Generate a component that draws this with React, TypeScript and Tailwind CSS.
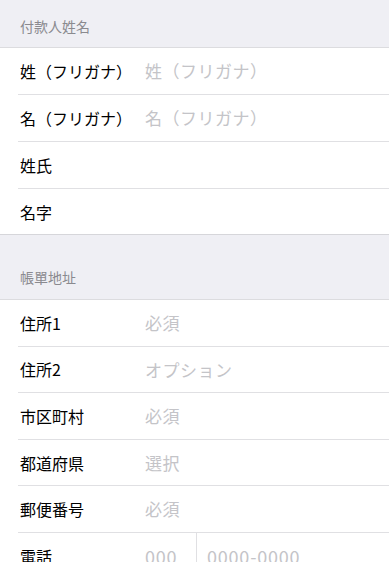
const font = { fontFamily: '"Noto Sans CJK JP", "Noto Sans", sans-serif' };

function SectionHeader({ title, tall }: { title: string; tall?: boolean }) {
  return (
    <div
      className={`flex items-end bg-[#efeff4] px-5 ${tall ? "h-[65px] border-t border-[#d6d6da] pb-[12px]" : "h-[47px] pb-[11px]"}`}
    >
      <span className="text-[14px] leading-5 text-[#8a8a8f]">{title}</span>
    </div>
  );
}

function Row({
  label,
  placeholder,
  last,
  h = "h-[47px]",
  children,
}: {
  label: string;
  placeholder?: string;
  last?: boolean;
  h?: string;
  children?: React.ReactNode;
}) {
  return (
    <div className="bg-white pl-[18px]">
      <div className={`flex ${h} items-center pl-[2px] ${last ? "" : "border-b border-[#e0e0e3]"}`}>
        <span className="w-[125px] shrink-0 text-[16px] text-black">{label}</span>
        {children ?? <span className="text-[17px] tracking-[0.5px] text-[#c4c4c8]">{placeholder}</span>}
      </div>
    </div>
  );
}

export default function App() {
  return (
    <div className="h-[562px] w-[389px] overflow-hidden bg-white" style={font}>
      <SectionHeader title="付款人姓名" />
      <div className="border-t border-[#dcdcdf]">
        <Row label="姓（フリガナ）" placeholder="姓（フリガナ）" />
        <Row label="名（フリガナ）" placeholder="名（フリガナ）" />
        <Row label="姓氏" />
        <Row label="名字" last h="h-[45px]" />
      </div>
      <SectionHeader title="帳單地址" tall />
      <div className="border-t border-[#dcdcdf]">
        <Row label="住所1" placeholder="必須" h="h-[46.6px]" />
        <Row label="住所2" placeholder="オプション" h="h-[46.6px]" />
        <Row label="市区町村" placeholder="必須" h="h-[46.6px]" />
        <Row label="都道府県" placeholder="選択" h="h-[46.6px]" />
        <Row label="郵便番号" placeholder="必須" h="h-[46.6px]" />
        <Row label="電話" last h="h-[46.6px]">
          <div className="flex h-full items-center text-[18px] tracking-[0.8px] text-[#c4c4c8]">
            <span className="w-[51px]">000</span>
            <span className="mr-[10px] h-full w-px bg-[#e0e0e3]" />
            <span>0000-0000</span>
          </div>
        </Row>
      </div>
    </div>
  );
}
